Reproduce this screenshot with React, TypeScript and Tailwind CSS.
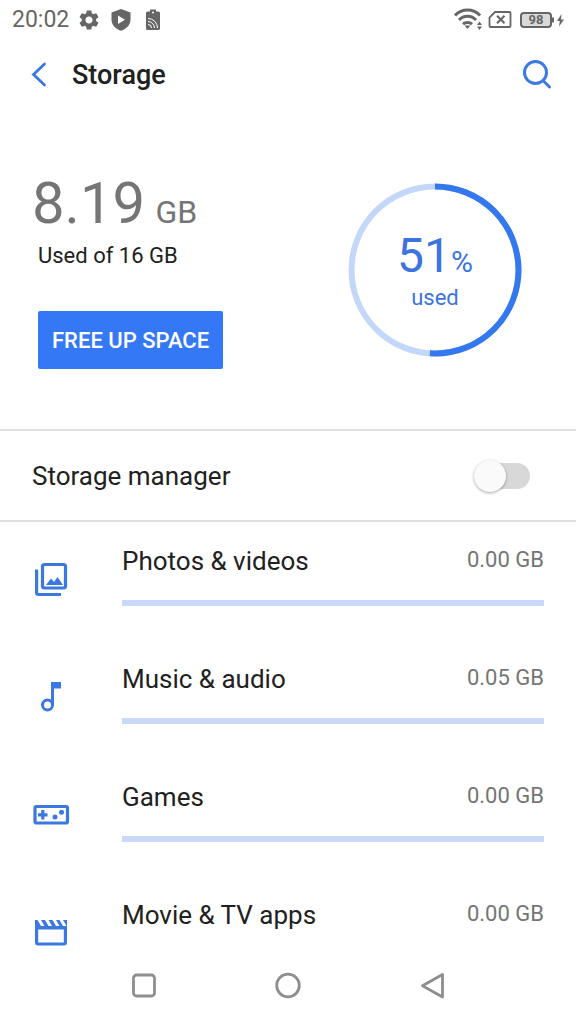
import React, { useState } from 'react';
import { MdSettings } from 'react-icons/md';

interface Category {
    name: string;
    size: string;
    icon: React.ReactNode;
}

const PhotosIcon = () => (
    <svg className="size-[38px]" viewBox="0 0 38 38" fill="none" stroke="currentColor" strokeWidth="3.200">
        <rect x="10.500" y="4.500" width="23" height="23.500" rx="2" />
        <path d="M4.600 9.500v23a2 2 0 0 0 2 2H29" />
        <path d="M14 25l5-6.500 3 3.500 3.500-5 5.500 8z" fill="currentColor" stroke="none" />
    </svg>
);

const MusicIcon = () => (
    <svg className="size-[38px]" viewBox="0 0 38 38" fill="none" stroke="currentColor" strokeWidth="3">
        <circle cx="15.500" cy="27" r="5" />
        <path d="M20.500 27.500V5" />
        <path d="M19 4h10v6.500H19z" fill="currentColor" stroke="none" />
    </svg>
);

const GamesIcon = () => (
    <svg className="size-[38px]" viewBox="0 0 38 38" fill="none" stroke="currentColor" strokeWidth="3.200">
        <rect x="3" y="10.500" width="32.500" height="16.500" rx="1.500" />
        <path d="M6 18.800h9.500M10.800 14v9.500" />
        <circle cx="23" cy="21" r="2.500" fill="currentColor" stroke="none" />
        <circle cx="29.500" cy="16.300" r="2.500" fill="currentColor" stroke="none" />
    </svg>
);

const MovieIcon = () => (
    <svg className="size-[38px]" viewBox="0 0 38 38" fill="currentColor">
        <path
            fillRule="evenodd"
            d="M3 6h2.500l3.500 6h3.500L9 6h4l3.500 6H20l-3.500-6h4l3.500 6h3.500L24 6h3.500l3.500 6h3.500L31 6h4v22.500a3 3 0 0 1-3 3H6a3 3 0 0 1-3-3zM6.200 15.500v13h25.600v-13z"
        />
    </svg>
);

const categories: Category[] = [
    { name: 'Photos & videos', size: '0.00 GB', icon: <PhotosIcon /> },
    { name: 'Music & audio', size: '0.05 GB', icon: <MusicIcon /> },
    { name: 'Games', size: '0.00 GB', icon: <GamesIcon /> },
    { name: 'Movie & TV apps', size: '0.00 GB', icon: <MovieIcon /> },
];

const StatusBar = () => (
    <div className="flex h-10 shrink-0 items-center justify-between px-3 text-[#666]">
        <div className="flex items-center gap-2">
            <span className="text-[23px] leading-6">20:02</span>
            <MdSettings className="size-6" />
            <svg className="mr-1 size-6" viewBox="0 0 24 24" fill="currentColor">
                <path
                    fillRule="evenodd"
                    d="M12 1l9.500 3.500v7c0 5.200-4 9.500-9.500 11.200C6.500 21 2.500 16.700 2.500 11.500v-7zM9 7.500v8.500l7-4.200z"
                />
            </svg>
            <svg className="h-6 w-4" viewBox="0 0 16 24">
                <path d="M5 3.500V1.500h6v2h2.500a1.500 1.500 0 0 1 1.500 1.500v15.500a1.500 1.500 0 0 1-1.500 1.500h-11A1.500 1.500 0 0 1 1 20.500V5a1.500 1.500 0 0 1 1.500-1.500z" fill="currentColor" />
                <circle cx="8" cy="4.500" r="1" fill="white" />
                <path d="M3 10.500a9.500 9.500 0 0 1 9.500 9.500M3 13.500a6.500 6.500 0 0 1 6.500 6.500M3 16.500a3.500 3.500 0 0 1 3.500 3.500" stroke="white" strokeWidth="1" fill="none" />
            </svg>
        </div>
        <div className="flex items-center gap-1.5">
            <svg className="h-6 w-7" viewBox="0 0 28 24" fill="none" stroke="currentColor" strokeWidth="3">
                <path d="M1 7.500a17 17 0 0 1 25 0M5 12a11.500 11.500 0 0 1 17 0M9 16.200a6.500 6.500 0 0 1 9 0" />
                <path d="M10.500 17.500h6l-3 3.500z" fill="currentColor" stroke="none" />
                <path d="M23 17l2.500-3.500L28 17zM23 18.500l2.500 3.500 2.500-3.500z" fill="currentColor" stroke="none" />
            </svg>
            <svg className="h-6 w-6" viewBox="0 0 24 24" fill="none" stroke="currentColor" strokeWidth="1.800">
                <path d="M7 4h14.500a1 1 0 0 1 1 1v13a1 1 0 0 1-1 1h-19a1 1 0 0 1-1-1V9.500z" />
                <path d="M9 7.800l7.500 7.500M16.500 7.800L9 15.300" strokeWidth="2" />
            </svg>
            <div className="ml-0.5 flex items-center">
                <span className="flex h-4 w-8 items-center justify-center rounded-sm border-2 border-[#666] bg-[#d9d9d9] text-[13px] leading-3 font-bold">
                    98
                </span>
                <svg className="h-4 w-3" viewBox="0 0 12 16" fill="currentColor">
                    <path d="M0 5.500h2v5H0zM9.500 2L5 9h2.800L7 14.500 12 7.500H9z" />
                </svg>
            </div>
        </div>
    </div>
);

const UsageRing: React.FC<{ percent: number }> = ({ percent }) => (
    <div className="grid size-[174px] place-items-center text-[#3b74e0]">
        <svg className="col-start-1 row-start-1 size-full -rotate-90" viewBox="0 0 174 174" fill="none" strokeWidth="6">
            <circle cx="87" cy="87" r="83.500" stroke="#c3d7f9" />
            <circle cx="87" cy="87" r="83.500" stroke="#3478f0" pathLength="100" strokeDasharray={`${percent} 100`} />
        </svg>
        <div className="col-start-1 row-start-1 text-center">
            <div className="text-5xl leading-[56px]">
                {percent}
                <span className="text-[30px] leading-8">%</span>
            </div>
            <div className="text-[22px] leading-7">used</div>
        </div>
    </div>
);

const CategoryRow: React.FC<{ category: Category }> = ({ category }) => (
    <li className="flex h-[118px] shrink-0 px-8 pt-5">
        <div className="mr-13 pt-[18px] text-[#3b78e0]">{category.icon}</div>
        <div className="flex-1">
            <div className="flex items-start justify-between">
                <span className="text-[26px] leading-[38px]">{category.name}</span>
                <span className="text-[22px] leading-[35px] text-[#757575]">{category.size}</span>
            </div>
            <div className="mt-5 h-1.5 bg-[#c8d9fa]" />
        </div>
    </li>
);

export default function App() {
    const [managerOn, setManagerOn] = useState(false);

    return (
        <div className="flex h-screen flex-col overflow-hidden bg-white font-[Roboto,sans-serif] text-[#212121]">
            <StatusBar />

            <header className="flex h-[70px] shrink-0 items-center px-6">
                <button aria-label="Back" className="text-[#3b78e0]">
                    <svg className="size-8" viewBox="0 0 32 32" fill="none" stroke="currentColor" strokeWidth="2.800" strokeLinecap="round">
                        <path d="M20.500 5L9.500 15.500l11 10.500" />
                    </svg>
                </button>
                <h1 className="ml-4 flex-1 text-[27px] leading-8 font-medium">Storage</h1>
                <button aria-label="Search" className="text-[#3b78e0]">
                    <svg className="size-8" viewBox="0 0 32 32" fill="none" stroke="currentColor" strokeWidth="3" strokeLinecap="round">
                        <circle cx="15.500" cy="13.500" r="11" />
                        <path d="M23 21.500l6.500 6.500" />
                    </svg>
                </button>
            </header>

            <main className="flex min-h-0 flex-1 flex-col overflow-hidden">
                <section className="flex shrink-0 items-center justify-between border-b-2 border-[#e0e0e0] pr-[54px] pl-8">
                    <div className="py-[60px]">
                        <div className="text-[58px] leading-[66px] text-[#757575]">
                            8.19 <span className="-ml-1 text-[32px] leading-8">GB</span>
                        </div>
                        <p className="ml-1.5 text-[22px] leading-[39px]">Used of 16 GB</p>
                        <button className="mt-9 ml-1.5 h-[58px] rounded-xs bg-[#3478f6] px-3.5 text-[22px] font-medium text-white">
                            FREE UP SPACE
                        </button>
                    </div>
                    <UsageRing percent={51} />
                </section>

                <label className="flex h-[91px] shrink-0 items-center justify-between border-b-2 border-[#e0e0e0] pr-[46px] pl-8">
                    <span className="text-[26px] leading-8">Storage manager</span>
                    <input
                        type="checkbox"
                        checked={managerOn}
                        onChange={(e) => setManagerOn(e.target.checked)}
                        className="peer sr-only"
                    />
                    <span className="flex h-[26px] w-14 items-center rounded-full bg-[#d8d8d8] peer-checked:justify-end peer-checked:bg-[#c3d7f9]">
                        <span className="size-8 rounded-full bg-[#fafafa] shadow-[0_1px_3px_rgba(0,0,0,0.35)]" />
                    </span>
                </label>

                <ul className="flex flex-col">
                    {categories.map((category) => (
                        <CategoryRow key={category.name} category={category} />
                    ))}
                </ul>
            </main>

            <nav className="grid h-[76px] shrink-0 grid-cols-3 bg-white px-[12.5%] text-[#8e8e8e]">
                <button aria-label="Recent apps" className="grid place-items-center">
                    <svg className="size-7" viewBox="0 0 28 28" fill="none" stroke="currentColor" strokeWidth="2.800">
                        <rect x="3.500" y="3" width="21" height="21" rx="3" />
                    </svg>
                </button>
                <button aria-label="Home" className="grid place-items-center">
                    <svg className="size-7" viewBox="0 0 28 28" fill="none" stroke="currentColor" strokeWidth="2.800">
                        <circle cx="14" cy="13.500" r="11.300" />
                    </svg>
                </button>
                <button aria-label="Back" className="grid place-items-center">
                    <svg className="size-7" viewBox="0 0 28 28" fill="none" stroke="currentColor" strokeWidth="2.800" strokeLinejoin="round">
                        <path d="M24.500 2.500v22.500l-20-11.200z" />
                    </svg>
                </button>
            </nav>
        </div>
    );
}
